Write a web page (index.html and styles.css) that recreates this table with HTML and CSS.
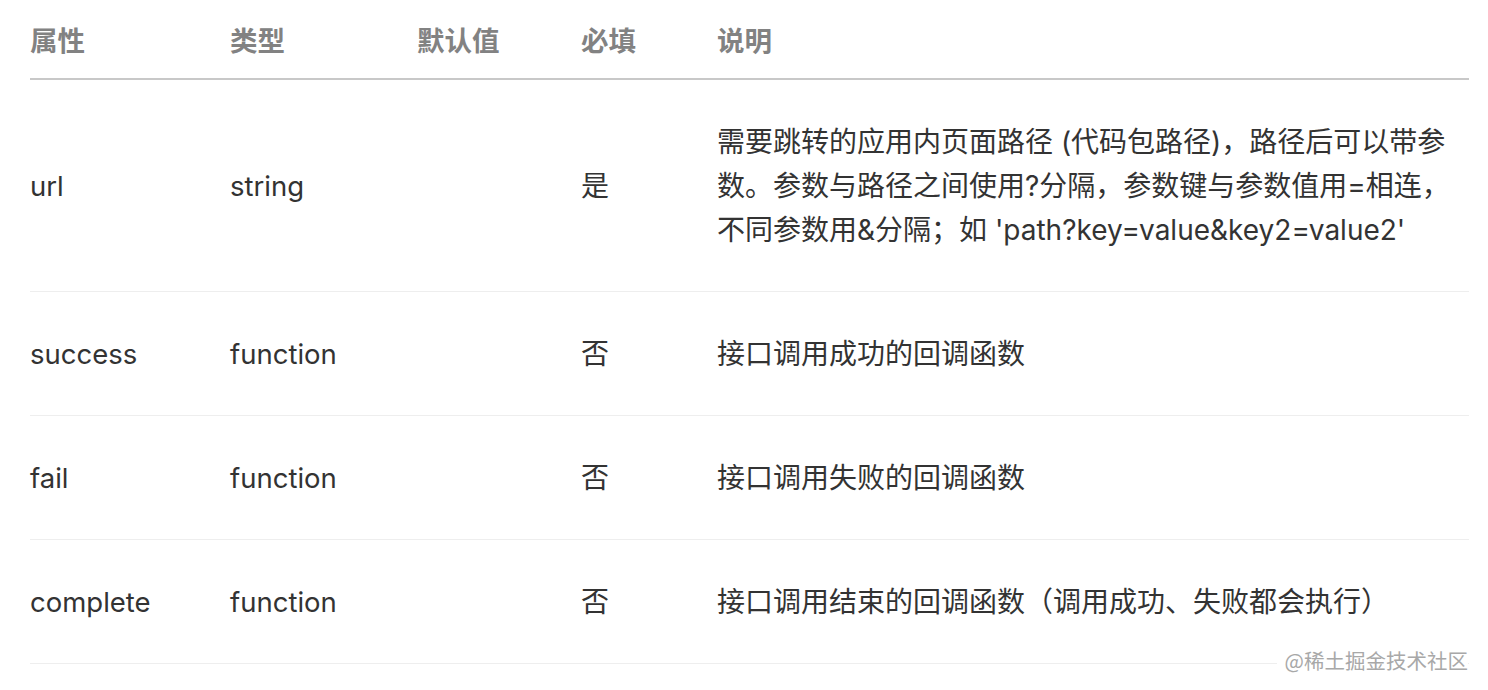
FILE: index.html
```html
<!DOCTYPE html>
<html lang="zh-CN">
<head>
<meta charset="utf-8">
<title>参数表</title>
<link rel="stylesheet" href="styles.css">
</head>
<body>
<div class="page">
  <table class="params">
    <colgroup>
      <col class="c-name"><col class="c-type"><col class="c-def"><col class="c-req"><col class="c-desc">
    </colgroup>
    <thead>
      <tr><th>属性</th><th>类型</th><th>默认值</th><th>必填</th><th>说明</th></tr>
    </thead>
    <tbody>
      <tr>
        <td>url</td><td>string</td><td></td><td>是</td>
        <td>需要跳转的应用内页面路径 (代码包路径)，路径后可以带参数。参数与路径之间使用?分隔，参数键与参数值用=相连，不同参数用&amp;分隔；如 'path?key=value&amp;key2=value2'</td>
      </tr>
      <tr><td>success</td><td>function</td><td></td><td>否</td><td>接口调用成功的回调函数</td></tr>
      <tr><td>fail</td><td>function</td><td></td><td>否</td><td>接口调用失败的回调函数</td></tr>
      <tr><td>complete</td><td>function</td><td></td><td>否</td><td>接口调用结束的回调函数（调用成功、失败都会执行）</td></tr>
    </tbody>
  </table>
  <div class="watermark">@稀土掘金技术社区</div>
</div>
</body>
</html>
```
FILE: styles.css
```css
html, body {
  margin: 0;
  padding: 0;
  background: #fff;
}
body {
  font-family: "Inter", "Noto Sans CJK SC", sans-serif;
  color: #333;
}
.page {
  position: relative;
  width: 1488px;
  height: 690px;
  overflow: hidden;
  padding: 0 19px 0 30px;
  box-sizing: border-box;
}
.params {
  width: 1439px;
  border-collapse: collapse;
  table-layout: fixed;
  font-size: 28px;
}
.c-name { width: 200px; }
.c-type { width: 187px; }
.c-def { width: 164px; }
.c-req { width: 136px; }
.params th {
  text-align: left;
  font-weight: 700;
  color: #828282;
  font-size: 27.5px;
  line-height: 44px;
  padding: 17px 0 17px;
  border-bottom: 2px solid #c8c8c8;
  font-family: "Noto Sans CJK SC", sans-serif;
}
.params td {
  padding: 40px 0 39px;
  line-height: 44px;
  vertical-align: middle;
  border-bottom: 1.5px solid #eeeeee;
  font-size: 27.5px;
}
.params td:nth-child(4),
.params td:nth-child(5) {
  font-size: 28px;
}
.watermark {
  position: absolute;
  right: 20px;
  top: 647px;
  padding-left: 8px;
  background: #fff;
  font-family: "Noto Sans CJK SC", sans-serif;
  font-size: 20.5px;
  line-height: 26px;
  color: #a8a8a8;
}
```
